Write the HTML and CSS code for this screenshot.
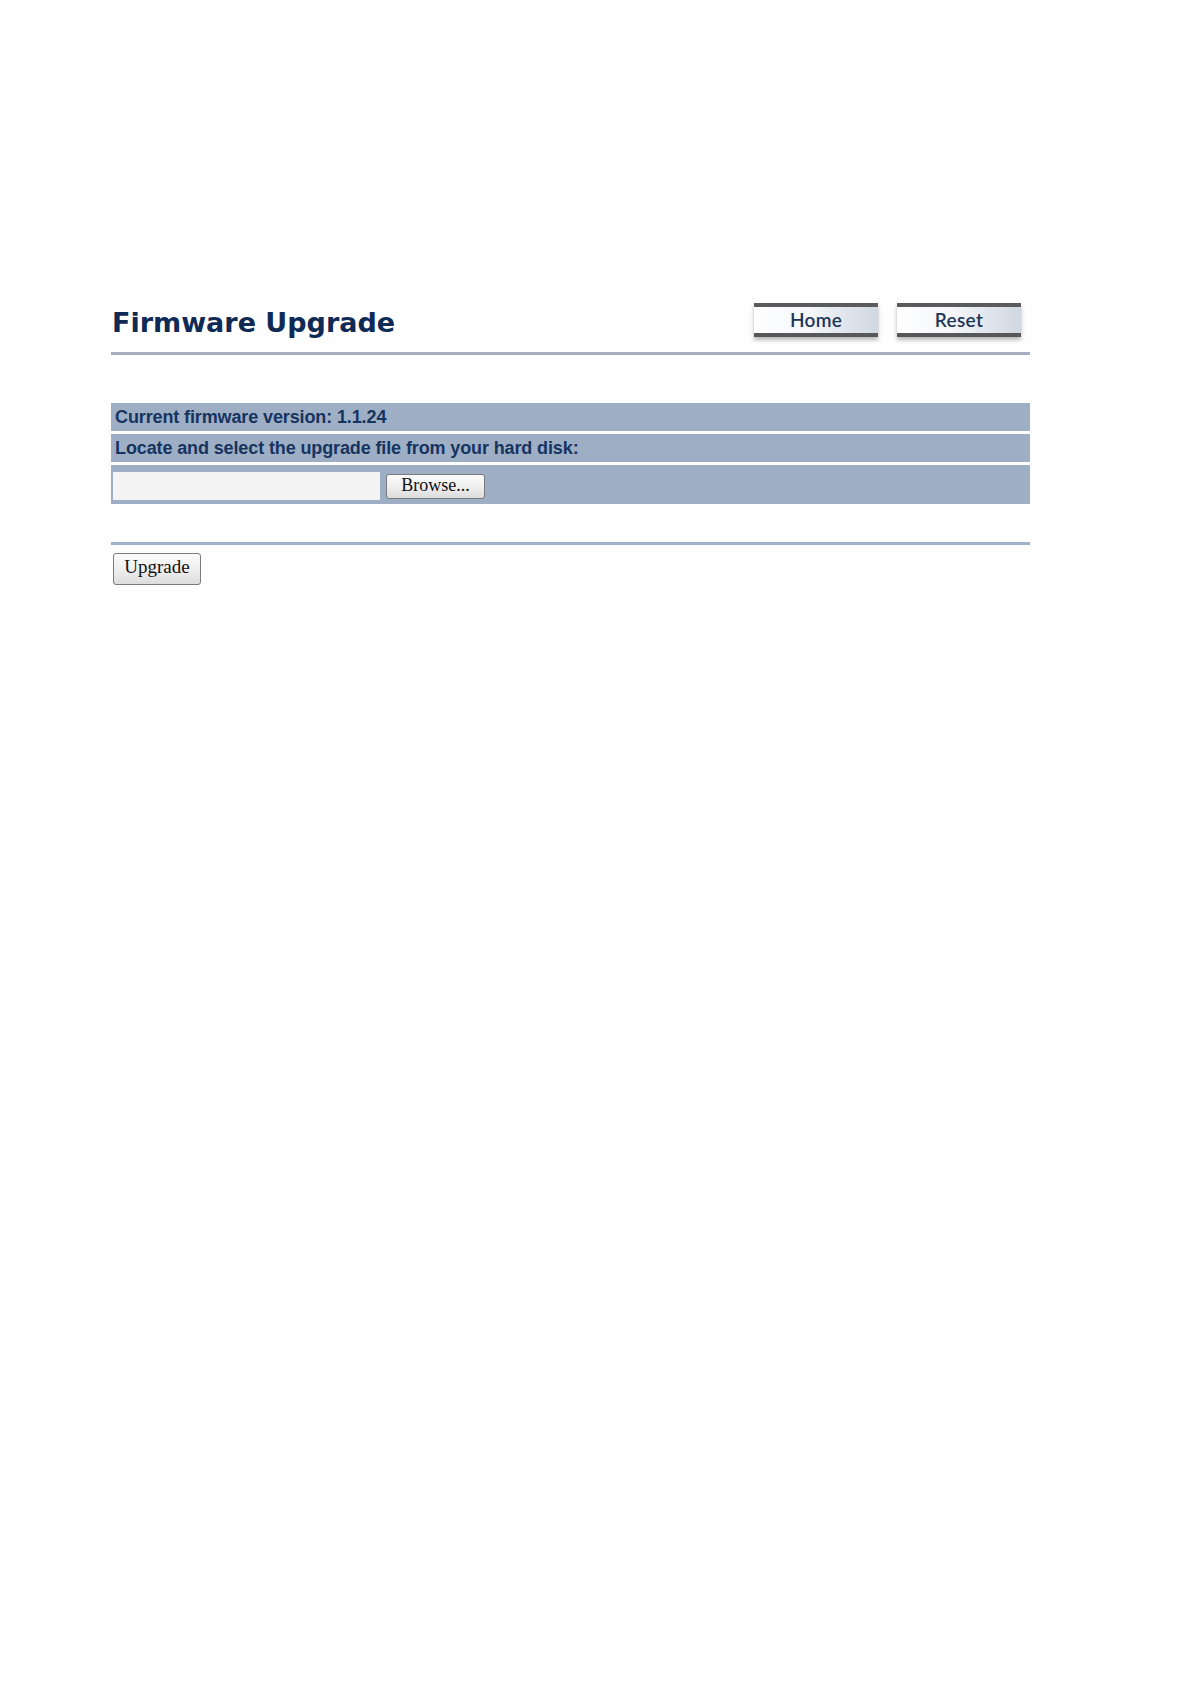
FILE: index.html
```html
<!DOCTYPE html>
<html lang="en">
<head>
<meta charset="utf-8">
<title>Firmware Upgrade</title>
<link rel="stylesheet" href="styles.css">
</head>
<body>
<div class="page">
  <div class="header">
    <h1 class="title">Firmware Upgrade</h1>
    <div class="nav">
      <button class="nav-btn" type="button">Home</button>
      <button class="nav-btn" type="button">Reset</button>
    </div>
  </div>

  <div class="panel">
    <div class="row">Current firmware version: 1.1.24</div>
    <div class="row">Locate and select the upgrade file from your hard disk:</div>
    <div class="row row-file">
      <span class="file-box"></span>
      <button class="legacy-btn browse" type="button">Browse...</button>
    </div>
  </div>

  <div class="footer">
    <button class="legacy-btn upgrade" type="button">Upgrade</button>
  </div>
</div>
</body>
</html>
```

FILE: styles.css
```css
html, body {
  margin: 0;
  padding: 0;
  background: #fefefe;
}

.page {
  width: 919px;
  margin-left: 111px;
  padding-top: 303px;
}

.header {
  display: flex;
  justify-content: space-between;
  align-items: flex-start;
  padding-bottom: 14px;
  border-bottom: 3px solid #a5afc0;
}

.title {
  margin: 5px 0 0 1px;
  font-family: "DejaVu Sans", Verdana, sans-serif;
  font-weight: bold;
  font-size: 27px;
  line-height: 30px;
  color: #0e2a55;
}

.nav {
  display: flex;
  gap: 19px;
  margin-right: 9px;
}

.nav-btn {
  width: 124px;
  height: 34px;
  margin: 0;
  padding: 0;
  border: none;
  border-top: 4px solid #5b5b5d;
  border-bottom: 4px solid #58585a;
  background: linear-gradient(to right, #ffffff 0%, #f4f6f9 45%, #cfd7e2 100%);
  box-shadow: 0 3px 4px rgba(0, 0, 0, 0.28);
  font-family: Lato, "DejaVu Sans", sans-serif;
  font-weight: 600;
  font-size: 19px;
  letter-spacing: 0.3px;
  line-height: 26px;
  color: #1d3558;
  cursor: pointer;
}

.panel {
  margin-top: 48px;
  display: flex;
  flex-direction: column;
  gap: 3px;
}

.row {
  background: #9eaec5;
  height: 28px;
  padding-left: 4px;
  font-family: "Liberation Sans", Arial, sans-serif;
  font-weight: bold;
  font-size: 18px;
  letter-spacing: -0.12px;
  line-height: 28px;
  color: #163460;
  white-space: nowrap;
}

.row-file {
  height: 39px;
  padding-left: 2px;
  display: flex;
  align-items: center;
  gap: 6px;
  padding-top: 3px;
  box-sizing: border-box;
}

.file-box {
  display: block;
  width: 267px;
  height: 28px;
  background: #f4f4f4;
  border-radius: 1px;
}

.legacy-btn {
  margin: 0;
  padding: 0;
  border: 1px solid #7a7a7a;
  border-radius: 3px;
  background: linear-gradient(to bottom, #fbfbfb 0%, #efefef 50%, #dcdcdc 100%);
  font-family: "Liberation Serif", "Times New Roman", serif;
  color: #111111;
  cursor: pointer;
}

.browse {
  width: 99px;
  height: 25px;
  font-size: 18px;
  line-height: 20px;
  padding-bottom: 3px;
}

.footer {
  margin-top: 38px;
  border-top: 3px solid #9fb1cb;
  padding-top: 8px;
}

.upgrade {
  display: block;
  margin-left: 2px;
  width: 88px;
  height: 32px;
  font-size: 19px;
  line-height: 24px;
  padding-bottom: 5px;
}
```
